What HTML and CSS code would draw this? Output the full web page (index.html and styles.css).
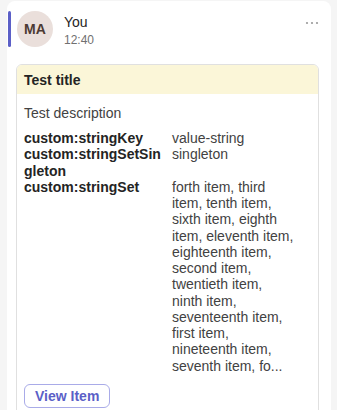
FILE: index.html
```html
<!DOCTYPE html>
<html>
<head>
    <title>Message card</title>
    <link rel="stylesheet" href="styles.css">
</head>
<body>
    <div class="message">
        <!-- Author row -->
        <div class="message-head">
            <div class="accent"></div>
            <div class="avatar">MA</div>
            <div class="author">
                <div class="author-name">You</div>
                <div class="author-time">12:40</div>
            </div>
            <div class="more">
                <svg width="14" height="4" viewBox="0 0 14 4">
                    <circle cx="2" cy="2" r="1.1" fill="#9a9a9a"/>
                    <circle cx="7" cy="2" r="1.1" fill="#9a9a9a"/>
                    <circle cx="12" cy="2" r="1.1" fill="#9a9a9a"/>
                </svg>
            </div>
        </div>

        <!-- Adaptive card -->
        <div class="card">
            <div class="card-title">Test title</div>
            <div class="card-body">
                <div class="card-desc">Test description</div>
                <div class="facts">
                    <div class="fact-key">custom:stringKey</div>
                    <div class="fact-value">value-string</div>
                    <div class="fact-key">custom:stringSetSingleton</div>
                    <div class="fact-value">singleton</div>
                    <div class="fact-key">custom:stringSet</div>
                    <div class="fact-value">forth item, third item, tenth item, sixth item, eighth item, eleventh item, eighteenth item, second item, twentieth item, ninth item, seventeenth item, first item, nineteenth item, seventh item, fo...</div>
                </div>
                <button class="view-btn">View Item</button>
            </div>
        </div>
    </div>
</body>
</html>
```

FILE: styles.css
```css
body {
    margin: 0;
    padding: 1px 6px 0 7px;
    background-color: #f5f5f5;
    font-family: "Liberation Sans", Arial, sans-serif;
    color: #242424;
}

.message {
    background-color: #fff;
    border-radius: 8px;
    padding: 10px 12px 20px 0;
    min-height: 420px;
}

.message-head {
    display: flex;
    align-items: flex-start;
}

.accent {
    width: 3px;
    height: 36px;
    margin-left: 1px;
    border-radius: 2px;
    background-color: #5b5fc7;
}

.avatar {
    width: 36px;
    height: 36px;
    margin-left: 6px;
    border-radius: 50%;
    background-color: #eadfdb;
    color: #4d3a33;
    font-size: 14px;
    font-weight: 600;
    display: flex;
    align-items: center;
    justify-content: center;
}

.author {
    margin-left: 11px;
    margin-top: 3px;
    flex: 1;
}

.author-name {
    font-size: 14px;
    line-height: 16px;
}

.author-time {
    margin-top: 2px;
    font-size: 12px;
    line-height: 16px;
    color: #707070;
}

.more {
    margin-top: 9px;
    line-height: 0;
}

.card {
    margin: 16px 0 0 9px;
    border: 1px solid #e0e0e0;
    border-radius: 6px;
    overflow: hidden;
}

.card-title {
    background-color: #fbf6d8;
    padding: 7px 7px 6px;
    font-size: 14px;
    line-height: 16px;
    font-weight: bold;
}

.card-body {
    padding: 11px 7px 10px;
    font-size: 14px;
    line-height: 1.16;
}

.card-desc {
    color: #424242;
}

.facts {
    display: grid;
    grid-template-columns: 140px 122px;
    column-gap: 8px;
    margin-top: 9px;
}

.fact-key {
    font-weight: bold;
    word-break: break-all;
}

.fact-value {
    color: #424242;
}

.view-btn {
    margin-top: 10px;
    height: 24px;
    padding: 0 10px;
    border: 1px solid #a9abe8;
    border-radius: 6px;
    background-color: #fff;
    color: #5b5fc7;
    font-family: inherit;
    font-size: 14px;
    font-weight: 600;
}
```
